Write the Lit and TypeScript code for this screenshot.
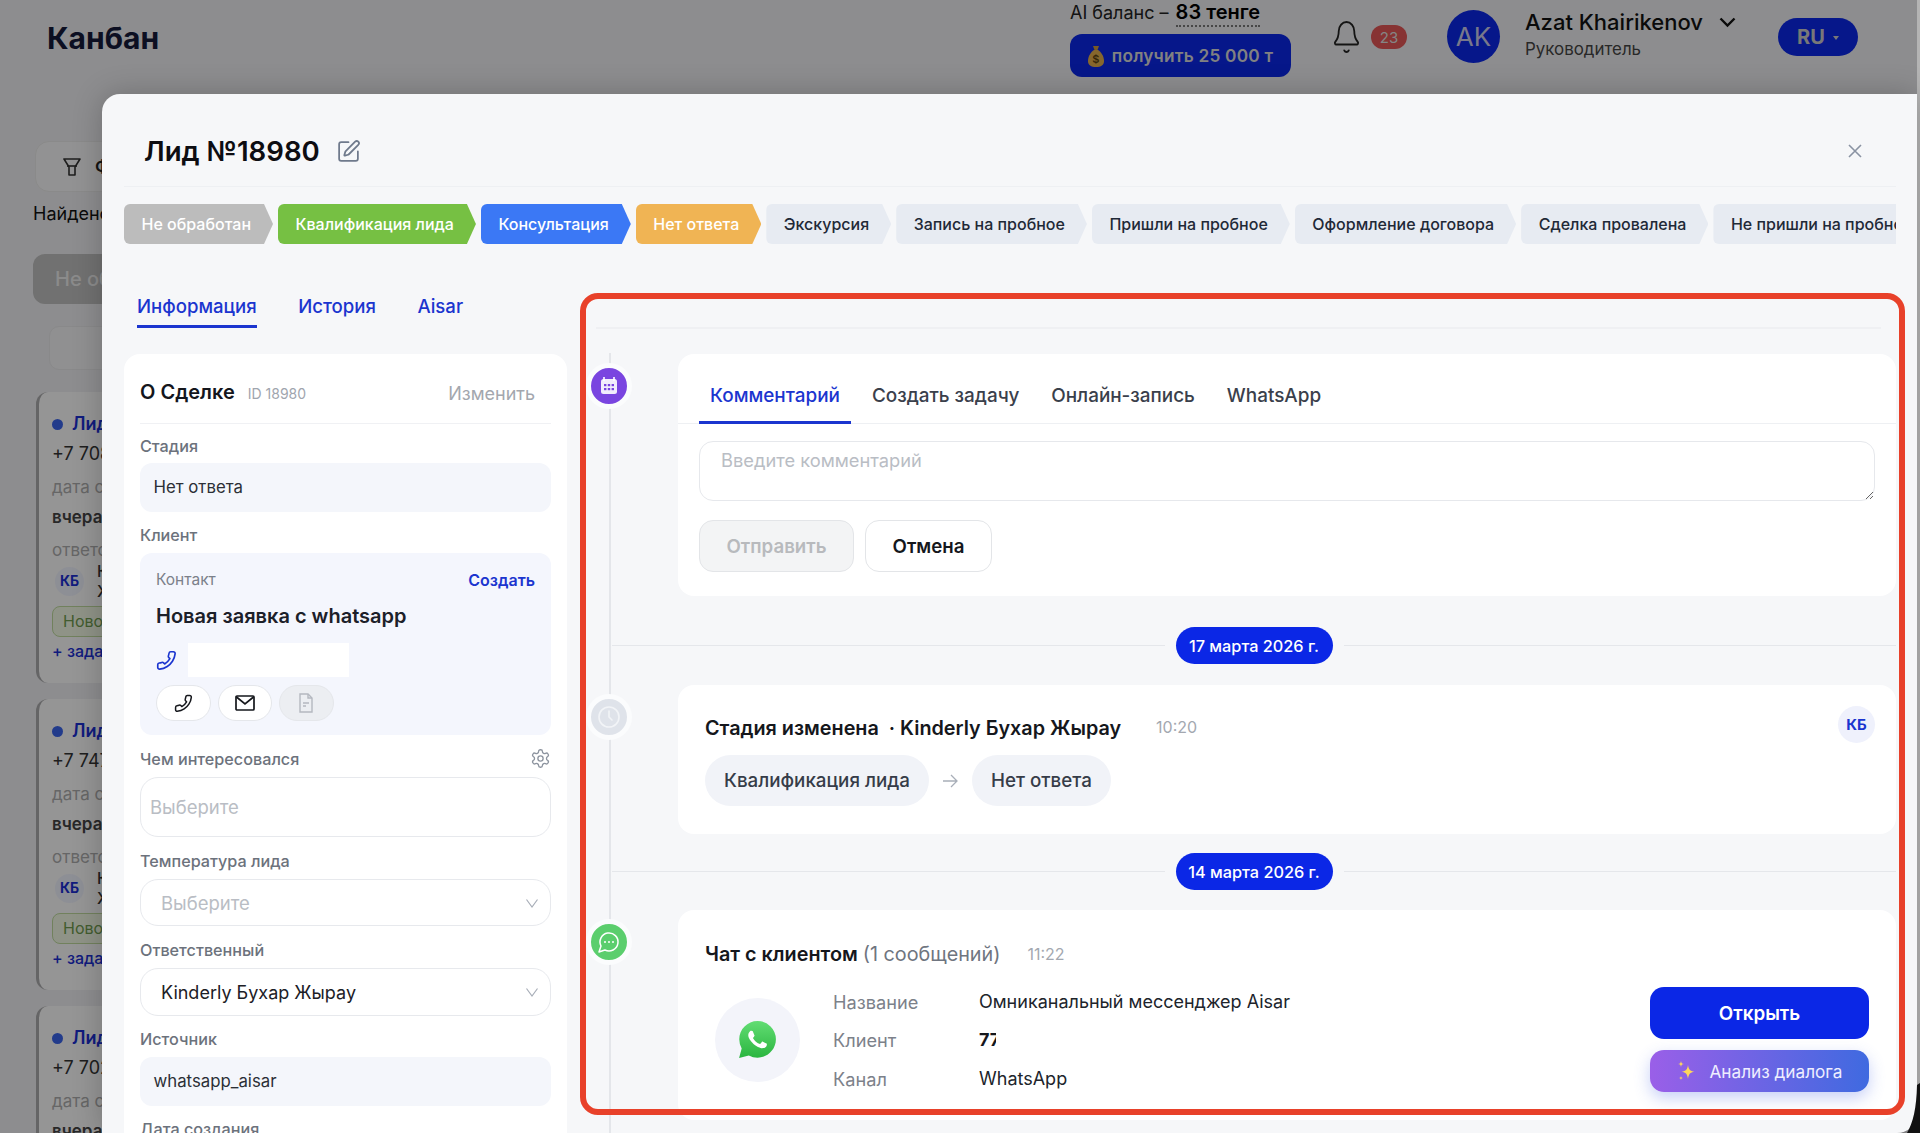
import { LitElement, html, css } from "lit";
import { customElement } from "lit/decorators.js";

const stages = [
  ["Не обработан", "grey"],
  ["Квалификация лида", "green"],
  ["Консультация", "blue"],
  ["Нет ответа", "orange"],
  ["Экскурсия", ""],
  ["Запись на пробное", ""],
  ["Пришли на пробное", ""],
  ["Оформление договора", ""],
  ["Сделка провалена", ""],
  ["Не пришли на пробное", ""],
];

const phonePath = "M22 16.92v3a2 2 0 0 1-2.18 2 19.79 19.79 0 0 1-8.63-3.07 19.5 19.5 0 0 1-6-6 19.79 19.79 0 0 1-3.07-8.67A2 2 0 0 1 4.11 2h3a2 2 0 0 1 2 1.72c.127.96.361 1.903.7 2.81a2 2 0 0 1-.45 2.11L8.09 9.91a16 16 0 0 0 6 6l1.27-1.27a2 2 0 0 1 2.11-.45c.907.339 1.85.573 2.81.7A2 2 0 0 1 22 16.92z";

const phone = (size: number, color: string) => html`<svg width=${size} height=${size} viewBox="0 0 24 24" fill="none" stroke=${color} stroke-width="1.9" stroke-linejoin="round"><path transform="translate(24 0) scale(-1 1)" d=${phonePath}></path></svg>`;
const chevron = html`<svg width="14" height="14" viewBox="0 0 14 14" fill="none" stroke="#a8aeb8" stroke-width="1.2"><path d="M1.5 3.5 7 11l5.5-7.5"></path></svg>`;

const leads = ["+7 708", "+7 747", "+7 702"];

@customElement("app-root")
export class AppRoot extends LitElement {
  static styles = css`
    :host { display: block; position: relative; width: 1920px; height: 1133px; overflow: hidden; font-family: Inter, "Noto Sans", sans-serif; color: #111827; background: #ececee; }
    * { box-sizing: border-box; }
    .page { height: 1133px; display: flex; flex-direction: column; }
    .top { display: flex; height: 94px; flex: none; align-items: flex-start; padding-left: 47px; }
    .brand { font-size: 30px; font-weight: 700; color: #141a3a; margin: 19px 0 0 0; line-height: 38px; flex: 1; }
    .bal { width: 221px; margin-right: 41px; }
    .bal-t { font-size: 18px; line-height: 24px; color: #222; white-space: nowrap; }
    .bal-t b { font-weight: 600; font-size: 20px; border-bottom: 2px dotted #777; padding-bottom: 1px; color: #000; margin-left: 2px; }
    .get { margin-top: 9px; height: 43px; border-radius: 12px; background: #0b27e6; color: #d8d8d8; display: flex; align-items: center; justify-content: center; gap: 8px; font-size: 17.300px; font-weight: 600; white-space: nowrap; letter-spacing: .2px; }
    .bell { margin-top: 19px; width: 30px; margin-left: -1px; }
    .badge { margin: 25px 0 0 10px; width: 36px; height: 24px; border-radius: 12px; background: #e25555; color: #ddd; font-size: 15px; display: flex; align-items: center; justify-content: center; }
    .ava { margin: 10px 0 0 40px; width: 53px; height: 53px; border-radius: 50%; background: #0b27e6; color: #c9c9e8; font-size: 26px; display: flex; align-items: center; justify-content: center; }
    .who { margin: 8px 0 0 25px; width: 253px; }
    .name { font-size: 22px; line-height: 28px; font-weight: 500; color: #111; display: flex; align-items: center; gap: 16px; white-space: nowrap; }
    .role { font-size: 16.900px; line-height: 20px; margin-top: 3px; color: #444; }
    .lang { margin: 18px 62px 0 0; width: 80px; height: 38px; border-radius: 19px; background: #0b27e6; color: #c9c9c9; font-weight: 700; font-size: 20px; display: flex; align-items: center; justify-content: center; gap: 8px; }
    .lang i { width: 0; height: 0; border: 3px solid transparent; border-top: 4px solid #c9c9c9; margin-top: 4px; }
    .board { padding: 47px 0 0 33px; }
    .filter { margin-left: 2px; width: 160px; height: 51px; background: #f4f4f5; border-radius: 14px; border: 1px solid #e6e6e6; display: flex; align-items: center; gap: 14px; padding-left: 27px; font-size: 18px; font-weight: 600; color: #222; }
    .found { font-size: 18px; line-height: 24px; margin-top: 10px; color: #111; }
    .col-h { margin-top: 28px; width: 300px; height: 50px; background: #bcbcbc; border-radius: 12px; color: #e8e8e8; font-size: 20px; font-weight: 500; display: flex; align-items: center; padding-left: 22px; }
    .search { margin: 22px 0 0 16px; width: 280px; height: 44px; border-radius: 10px; border: 1px solid #e4e4e6; background: #f0f0f2; }
    .lead { margin: 22px 0 0 3px; width: 300px; height: 291px; background: #f8f8f9; border-left: 3px solid #a9a9ab; border-radius: 12px; padding: 21px 0 0 13px; font-size: 18px; }
    .lead + .lead { margin-top: 16px; }
    .l1 { display: flex; align-items: center; gap: 9px; color: #1b2fd0; font-weight: 600; line-height: 22px; }
    .l1 i { width: 11px; height: 11px; border-radius: 50%; background: #3a63e8; }
    .l2 { line-height: 22px; margin-top: 8px; color: #333; }
    .l3 { line-height: 20px; margin-top: 12px; color: #aaa; font-size: 17px; }
    .l4 { line-height: 20px; margin-top: 10px; color: #444; font-weight: 600; font-size: 17px; }
    .l5 { line-height: 20px; margin-top: 13px; color: #aaa; font-size: 17px; }
    .l6 { display: flex; align-items: center; gap: 13px; margin-top: 1px; margin-left: 3px; font-size: 16px; line-height: 20px; color: #333; font-weight: 500; }
    .kb { width: 29px; height: 29px; border-radius: 50%; background: #eceef9; color: #1b2fd0; font-size: 14px; font-weight: 700; display: flex; align-items: center; justify-content: center; }
    .l7 { margin-top: 5px; width: 120px; height: 31px; border: 1px solid #bcd89b; background: #eef6e2; color: #6f9a4f; border-radius: 8px; padding-left: 10px; line-height: 29px; font-size: 16px; }
    .l8 { margin-top: 4px; color: #1b2fd0; font-weight: 500; font-size: 16px; }

    .scrim { position: absolute; inset: 0; background: rgba(0, 0, 0, .4); }
    .edge { position: absolute; right: 0; top: 0; width: 3px; height: 1085px; background: #b4b4b4; }
    .corner { position: absolute; right: 0; bottom: 0; display: block; }

    .modal { position: absolute; left: 102px; top: 94px; width: 1815px; height: 1039px; background: #f6f7f9; border-radius: 18px 0 20px 0; box-shadow: 0 0 30px rgba(0,0,0,.22); padding: 0 21px 0 22px; overflow: hidden; display: flex; flex-direction: column; }
    .m-head { height: 93px; flex: none; border-bottom: 1px solid #eef0f3; display: flex; align-items: center; padding: 22px 34px 0 20px; gap: 16px; }
    .m-head h1 { margin: 0; font-size: 27.600px; line-height: 34px; font-weight: 600; color: #0d0d12; white-space: nowrap; }
    .m-head .x { margin-left: auto; }
    .stages { display: flex; gap: 5px; margin-top: 17px; height: 40px; flex: none; overflow: hidden; }
    .st { flex: none; height: 40px; padding: 0 22px 0 17.500px; border-radius: 6px 0 0 6px; font-size: 16px; line-height: 40px; font-weight: 500; white-space: nowrap; background: #e7ebf2; color: #1f2937; clip-path: polygon(0 0, calc(100% - 9px) 0, 100% 50%, calc(100% - 9px) 100%, 0 100%); }
    .st.grey { background: #bcbcbc; color: #fff; }
    .st.green { background: #76c043; color: #fff; }
    .st.blue { background: #3b78f5; color: #fff; }
    .st.orange { background: #f0b454; color: #fff; }
    .m-body { flex: 1; display: flex; gap: 13px; min-height: 0; }
    .left { width: 443px; flex: none; }
    .l-tabs { display: flex; gap: 41.500px; margin-top: 41px; height: 43px; padding-left: 13px; }
    .l-tab { font-size: 18.600px; line-height: 43px; font-weight: 500; color: #1b35cf; height: 43px; white-space: nowrap; }
    .l-tab.on { border-bottom: 3px solid #1b35cf; }
    .about { margin-top: 26px; background: #fff; border-radius: 16px; padding: 0 16px; height: 800px; }
    .a-head { height: 70px; padding-top: 6px; border-bottom: 1px solid #f0f1f4; display: flex; align-items: center; }
    .a-head b { font-size: 20px; font-weight: 600; color: #14161c; }
    .a-head small { font-size: 14px; color: #a0a5ae; margin-left: 13px; margin-top: 3px; }
    .a-head span { margin-left: auto; margin-right: 16px; font-size: 18px; color: #a3a7ae; margin-top: 3px; }
    .f { margin-top: 13px; display: flex; flex-direction: column; gap: 8px; }
    .f.first { margin-top: 12px; gap: 7px; }
    .f.loose { margin-top: 14px; }
    .lab { font-size: 16.200px; line-height: 20px; font-weight: 500; color: #6c727c; display: flex; justify-content: space-between; align-items: center; white-space: nowrap; }
    .ro { height: 49px; background: #f4f6fb; border-radius: 12px; padding-left: 13.500px; font-size: 16.800px; line-height: 49px; color: #2b2f36; }
    .ctl { border: 1px solid #e7e9ed; border-radius: 18px; background: #fff; display: flex; align-items: center; justify-content: space-between; padding: 0 11px 0 20px; font-size: 18px; color: #1d2026; }
    .ctl.ph { color: #b9bdc4; font-size: 18.500px; }
    .ctl.tall { height: 60px; padding-left: 9px; }
    .ctl.h47 { height: 47px; }
    .ctl.h48 { height: 48px; }
    .contact { height: 182px; background: #f4f6fd; border-radius: 12px; padding: 17px 16px 0; }
    .c-top { display: flex; justify-content: space-between; font-size: 15.500px; line-height: 20px; color: #7b808a; }
    .c-top b { font-size: 16px; font-weight: 600; color: #1b35cf; }
    .c-name { margin-top: 12px; font-size: 20px; line-height: 28px; font-weight: 600; color: #1c2029; white-space: nowrap; }
    .c-ph { margin-top: 13px; height: 34px; display: flex; align-items: center; gap: 11px; }
    .mask { width: 161px; height: 34px; background: #fff; }
    .c-btns { margin-top: 8px; display: flex; gap: 7px; }
    .c-btn { width: 54.500px; height: 36px; border-radius: 18px; border: 1px solid #e5e7eb; background: #fff; display: flex; align-items: center; justify-content: center; }
    .c-btn.off { background: #eceef2; }

    .right { flex: 1; position: relative; padding-left: 98px; min-width: 0; }
    .rule { margin: 83px 15px 25px -82px; height: 2px; background: #eff0f3; }
    .rail { position: absolute; left: 28.500px; top: 109px; bottom: 0; width: 2px; background: #e4e6ea; }
    .item { position: relative; }
    .node { position: absolute; left: -92px; top: 9px; width: 46px; height: 46px; border-radius: 50%; border: 5px solid #fbfcfd; display: flex; align-items: center; justify-content: center; }
    .node.purple { background: #7a45e0; }
    .node.gray { background: #dfe3ea; }
    .node.green { background: #5bce6d; }
    .card { background: #fff; border-radius: 16px; }
    .card1 { height: 242px; }
    .t-tabs { height: 70px; display: flex; gap: 10px; padding-left: 21px; border-bottom: 1px solid #eef0f3; }
    .t-tab { padding: 0 11px; height: 70px; line-height: 84px; font-size: 18.900px; font-weight: 500; color: #3a404b; white-space: nowrap; }
    .t-tab.on { color: #1b35cf; border-bottom: 3px solid #1b35cf; }
    textarea { display: block; margin: 17px 0 0 21px; width: 1176px; height: 60px; border: 1px solid #e6e8ec; border-radius: 14px; padding: 7px 21px; font: 400 18.300px/22px Inter, sans-serif; outline: none; background: #fff; }
    textarea::placeholder { color: #b9bdc4; }
    .acts { display: flex; gap: 11px; margin: 19px 0 0 21px; }
    .btn { height: 52px; border-radius: 14px; border: 1px solid #e3e5e8; font-size: 18.700px; font-weight: 600; display: flex; align-items: center; justify-content: center; background: #fff; color: #15171c; }
    .btn.off { width: 155px; background: #f3f4f5; color: #b8babd; }
    .btn.cancel { width: 127px; }
    .date { display: flex; align-items: center; gap: 11px; margin-left: -66px; height: 37px; }
    .date::before, .date::after { content: ""; flex: 1; height: 1px; background: #e5e7eb; }
    .date span { width: 157px; height: 37px; border-radius: 19px; background: #0b27e6; color: #fff; font-size: 16.300px; font-weight: 500; display: flex; align-items: center; justify-content: center; white-space: nowrap; }
    .d1 { margin-top: 31px; margin-bottom: 21px; }
    .d2 { margin-top: 19px; margin-bottom: 20px; }
    .card2 { height: 149px; padding: 21px 21px 0 27px; }
    .c2-top { display: flex; align-items: center; height: 37px; }
    .tt { font-size: 19.800px; line-height: 24px; font-weight: 600; color: #15171c; white-space: nowrap; margin-top: 6px; }
    .tt span { font-weight: 400; color: #6f7580; }
    .tm { font-size: 16px; color: #a3a8b0; margin-left: 35px; margin-top: 5px; }
    .kbb { margin-left: auto; width: 37px; height: 37px; border-radius: 50%; background: #eff1fc; color: #1b35cf; font-size: 15px; font-weight: 700; display: flex; align-items: center; justify-content: center; }
    .pills { margin-top: 12px; display: flex; align-items: center; gap: 14px; }
    .pill { height: 51px; border-radius: 26px; background: #f1f3f8; padding: 0 19px; font-size: 18.800px; font-weight: 500; line-height: 51px; color: #363c48; white-space: nowrap; }
    .card3 { height: 210px; padding: 32px 27px 0; }
    .c3-top { display: flex; align-items: center; }
    .c3-top .tt, .c3-top .tm { margin-top: 0; }
    .c3-top .tm { margin-left: 27px; }
    .c3-row { margin-top: 21px; margin-left: 10px; display: flex; align-items: center; }
    .wa { width: 85px; height: 84px; border-radius: 50%; background: #f3f4fa; display: flex; align-items: center; justify-content: center; flex: none; }
    .grid { margin: 1px 0 0 33px; display: grid; grid-template-columns: 146px auto; row-gap: 14.500px; font-size: 18px; line-height: 24px; color: #20242b; }
    .grid .k { color: #7c818a; font-size: 18.200px; }
    .clip { width: 17px; overflow: hidden; font-weight: 700; white-space: nowrap; color: #15171c; }
    .cta { margin-left: auto; width: 219px; display: flex; flex-direction: column; gap: 11px; }
    .open { height: 52px; border-radius: 14px; background: #0b27e6; color: #fff; font-size: 18.800px; font-weight: 600; display: flex; align-items: center; justify-content: center; }
    .ai { height: 42px; border-radius: 14px; background: linear-gradient(90deg, #9a5fe8, #3f6ae0); color: #eef; font-size: 17.200px; font-weight: 400; display: flex; align-items: center; justify-content: center; gap: 13px; box-shadow: 0 6px 16px rgba(70, 100, 230, .3); white-space: nowrap; }

    .frame { position: absolute; left: 580px; top: 293px; width: 1325px; height: 822px; border: 6px solid #e8412a; border-radius: 18px; pointer-events: none; }
  `;

  render() {
    return html`
      <div class="page">
        <header class="top">
          <div class="brand">Канбан</div>
          <div class="bal">
            <div class="bal-t">AI баланс – <b>83 тенге</b></div>
            <div class="get">
              <svg width="16" height="22" viewBox="0 0 16 22"><path d="M5 1h6l-1.500 4h-3z" fill="#c9963c"/><path d="M6 5h4c3 2 6 6 6 11 0 4-3 6-8 6s-8-2-8-6c0-5 3-9 6-11z" fill="#e0ac4c"/><text x="8" y="18" font-size="11" font-family="Inter" font-weight="600" text-anchor="middle" fill="#5a4210">$</text></svg>
              получить 25 000 т
            </div>
          </div>
          <div class="bell"><svg width="31" height="36" viewBox="0 0 24 24" preserveAspectRatio="none" fill="none" stroke="#222" stroke-width="1.4" stroke-linecap="round" stroke-linejoin="round"><path d="M10.268 21a2 2 0 0 0 3.464 0"/><path d="M3.262 15.326A1 1 0 0 0 4 17h16a1 1 0 0 0 .74-1.673C19.41 13.956 18 12.499 18 8A6 6 0 0 0 6 8c0 4.499-1.411 5.956-2.738 7.326"/></svg></div>
          <div class="badge">23</div>
          <div class="ava">AK</div>
          <div class="who">
            <div class="name">Azat Khairikenov <svg width="17" height="11" viewBox="0 0 17 11" fill="none" stroke="#111" stroke-width="2.4"><path d="M1.500 1.500 8.500 8.500l7-7"/></svg></div>
            <div class="role">Руководитель</div>
          </div>
          <div class="lang">RU<i></i></div>
        </header>
        <section class="board">
          <div class="filter"><svg width="18" height="20" viewBox="0 0 18 20" fill="none" stroke="#333" stroke-width="1.600" stroke-linejoin="round"><path d="M1 2h16l-5 8v8H6v-8z"/><path d="M4 9h10" /></svg>Ф</div>
          <div class="found">Найдено</div>
          <div class="col-h">Не обработан</div>
          <div class="search"></div>
          ${leads.map((l) => html`
            <div class="lead">
              <div class="l1"><i></i>Лид</div>
              <div class="l2">${l}</div>
              <div class="l3">дата создания</div>
              <div class="l4">вчера,</div>
              <div class="l5">ответственный</div>
              <div class="l6"><span class="kb">КБ</span><span>К<br>Х</span></div>
              <div class="l7">Новое</div>
              <div class="l8">+ задача</div>
            </div>`)}
        </section>
      </div>
      <div class="scrim"></div>
      <div class="edge"></div>
      <main class="modal">
        <div class="m-head">
          <h1>Лид №18980</h1>
          <svg width="25" height="25" viewBox="0 0 24 24" fill="none" stroke="#6f7a8c" stroke-width="1.700" stroke-linecap="round" stroke-linejoin="round"><path d="M12 3H5a2 2 0 0 0-2 2v14a2 2 0 0 0 2 2h14a2 2 0 0 0 2-2v-7"/><path d="M18.375 2.625a1 1 0 0 1 3 3l-9.013 9.014a2 2 0 0 1-.853.505l-2.873.84a.5.5 0 0 1-.62-.62l.84-2.873a2 2 0 0 1 .506-.852z"/></svg>
          <svg class="x" width="14" height="14" viewBox="0 0 14 14" fill="none" stroke="#8a93a3" stroke-width="1.600"><path d="M1 1l12 12M13 1 1 13"/></svg>
        </div>
        <div class="stages">
          ${stages.map(([t, c]) => html`<div class="st ${c}">${t}</div>`)}
        </div>
        <div class="m-body">
          <div class="left">
            <div class="l-tabs">
              <div class="l-tab on">Информация</div>
              <div class="l-tab">История</div>
              <div class="l-tab">Aisar</div>
            </div>
            <div class="about">
              <div class="a-head"><b>О Сделке</b><small>ID 18980</small><span>Изменить</span></div>
              <div class="f first"><div class="lab">Стадия</div><div class="ro">Нет ответа</div></div>
              <div class="f"><div class="lab">Клиент</div>
                <div class="contact">
                  <div class="c-top"><span>Контакт</span><b>Создать</b></div>
                  <div class="c-name">Новая заявка с whatsapp</div>
                  <div class="c-ph">${phone(21, "#1b35cf")}<div class="mask"></div></div>
                  <div class="c-btns">
                    <div class="c-btn">${phone(19, "#15171c")}</div>
                    <div class="c-btn"><svg width="20" height="16" viewBox="0 0 20 16" fill="none" stroke="#15171c" stroke-width="1.700"><rect x="1" y="1" width="18" height="14" rx="1"/><path d="M1.500 2 10 9l8.500-7"/></svg></div>
                    <div class="c-btn off"><svg width="16" height="20" viewBox="0 0 16 20" fill="none" stroke="#b4b8c0" stroke-width="1.400"><path d="M2 1h8l4 4v14H2z"/><path d="M10 1v4h4M5 10h6M5 13h3"/></svg></div>
                  </div>
                </div>
              </div>
              <div class="f"><div class="lab">Чем интересовался
                <svg width="21" height="21" viewBox="0 0 24 24" fill="none" stroke="#8d949f" stroke-width="1.500"><path d="M12.22 2h-.44a2 2 0 0 0-2 2v.18a2 2 0 0 1-1 1.73l-.43.25a2 2 0 0 1-2 0l-.15-.08a2 2 0 0 0-2.73.73l-.22.38a2 2 0 0 0 .73 2.73l.15.1a2 2 0 0 1 1 1.72v.51a2 2 0 0 1-1 1.74l-.15.09a2 2 0 0 0-.73 2.73l.22.38a2 2 0 0 0 2.73.73l.15-.08a2 2 0 0 1 2 0l.43.25a2 2 0 0 1 1 1.73V20a2 2 0 0 0 2 2h.44a2 2 0 0 0 2-2v-.18a2 2 0 0 1 1-1.73l.43-.25a2 2 0 0 1 2 0l.15.08a2 2 0 0 0 2.73-.73l.22-.39a2 2 0 0 0-.73-2.73l-.15-.08a2 2 0 0 1-1-1.74v-.5a2 2 0 0 1 1-1.74l.15-.09a2 2 0 0 0 .73-2.73l-.22-.38a2 2 0 0 0-2.73-.73l-.15.08a2 2 0 0 1-2 0l-.43-.25a2 2 0 0 1-1-1.73V4a2 2 0 0 0-2-2z"/><circle cx="12" cy="12" r="3"/></svg></div>
                <div class="ctl ph tall">Выберите</div></div>
              <div class="f loose"><div class="lab">Температура лида</div><div class="ctl ph h47">Выберите ${chevron}</div></div>
              <div class="f loose"><div class="lab">Ответственный</div><div class="ctl h48">Kinderly Бухар Жырау ${chevron}</div></div>
              <div class="f"><div class="lab">Источник</div><div class="ro">whatsapp_aisar</div></div>
              <div class="f"><div class="lab">Дата создания</div></div>
            </div>
          </div>
          <div class="right">
            <div class="rail"></div>
            <div class="rule"></div>
            <div class="item">
              <div class="node purple"><svg width="20" height="20" viewBox="0 0 20 20"><path d="M5 1v4M15 1v4" stroke="#fff" stroke-width="1.600"/><rect x="2" y="3" width="16" height="15" rx="2.500" fill="#fff" fill-opacity=".9"/><g fill="#7a45e0"><rect x="5" y="8" width="2.400" height="2.200"/><rect x="8.800" y="8" width="2.400" height="2.200"/><rect x="12.600" y="8" width="2.400" height="2.200"/><rect x="5" y="12" width="2.400" height="2.200"/><rect x="8.800" y="12" width="2.400" height="2.200"/><rect x="12.600" y="12" width="2.400" height="2.200"/></g></svg></div>
              <div class="card card1">
                <div class="t-tabs">
                  <div class="t-tab on">Комментарий</div>
                  <div class="t-tab">Создать задачу</div>
                  <div class="t-tab">Онлайн-запись</div>
                  <div class="t-tab">WhatsApp</div>
                </div>
                <textarea placeholder="Введите комментарий"></textarea>
                <div class="acts">
                  <div class="btn off">Отправить</div>
                  <div class="btn cancel">Отмена</div>
                </div>
              </div>
            </div>
            <div class="date d1"><span>17 марта 2026 г.</span></div>
            <div class="item">
              <div class="node gray"><svg width="24" height="24" viewBox="0 0 24 24" fill="none" stroke="#f2f4f7" stroke-width="1.600" stroke-linecap="round"><circle cx="12" cy="12" r="10"/><path d="M12 6v6l3 3"/></svg></div>
              <div class="card card2">
                <div class="c2-top">
                  <div class="tt">Стадия изменена &nbsp;· Kinderly Бухар Жырау</div>
                  <div class="tm">10:20</div>
                  <div class="kbb">КБ</div>
                </div>
                <div class="pills">
                  <div class="pill">Квалификация лида</div>
                  <svg width="15" height="14" viewBox="0 0 15 14" fill="none" stroke="#a8aeb8" stroke-width="1.300"><path d="M0 7h14M8 1l6 6-6 6"/></svg>
                  <div class="pill">Нет ответа</div>
                </div>
              </div>
            </div>
            <div class="date d2"><span>14 марта 2026 г.</span></div>
            <div class="item">
              <div class="node green"><svg width="24" height="24" viewBox="0 0 24 24" fill="none" stroke="#fff" stroke-width="1.500" stroke-linejoin="round"><path d="M7.9 20A9 9 0 1 0 4 16.1L2 22Z"/><g fill="#fff" stroke="none"><circle cx="8" cy="12" r="1"/><circle cx="12" cy="12" r="1"/><circle cx="16" cy="12" r="1"/></g></svg></div>
              <div class="card card3">
                <div class="c3-top">
                  <div class="tt">Чат с клиентом <span>(1 сообщений)</span></div>
                  <div class="tm">11:22</div>
                </div>
                <div class="c3-row">
                  <div class="wa"><svg width="37" height="37" viewBox="0 0 24 24"><defs><linearGradient id="wg" x1="0" y1="0" x2="0" y2="1"><stop offset="0" stop-color="#62dd73"/><stop offset="1" stop-color="#2ab53f"/></linearGradient></defs><path fill="url(#wg)" d="M.057 24l1.688-6.163A11.87 11.87 0 0 1 .157 11.892C.16 5.335 5.495 0 12.05 0a11.82 11.82 0 0 1 8.413 3.488 11.82 11.82 0 0 1 3.48 8.413c-.003 6.558-5.339 11.893-11.893 11.893h-.005a11.88 11.88 0 0 1-5.683-1.448Z"/><path fill="#fff" d="M17.472 14.382c-.297-.149-1.758-.867-2.03-.967-.273-.099-.471-.148-.67.15-.197.297-.767.966-.94 1.164-.173.199-.347.223-.644.075-.297-.15-1.255-.463-2.39-1.475-.883-.788-1.48-1.761-1.653-2.059-.173-.297-.018-.458.13-.606.134-.133.298-.347.446-.52.149-.174.198-.298.298-.497.099-.198.05-.371-.025-.52-.075-.149-.669-1.612-.916-2.207-.242-.579-.487-.5-.669-.51-.173-.008-.371-.01-.57-.01-.198 0-.52.074-.792.372-.272.297-1.04 1.016-1.04 2.479 0 1.462 1.065 2.875 1.213 3.074.149.198 2.096 3.2 5.077 4.487.709.306 1.262.489 1.694.625.712.227 1.36.195 1.871.118.571-.085 1.758-.719 2.006-1.413.248-.694.248-1.289.173-1.413-.074-.124-.272-.198-.57-.347"/></svg></div>
                  <div class="grid">
                    <div class="k">Название</div><div>Омниканальный мессенджер Aisar</div>
                    <div class="k">Клиент</div><div class="clip">77</div>
                    <div class="k">Канал</div><div>WhatsApp</div>
                  </div>
                  <div class="cta">
                    <div class="open">Открыть</div>
                    <div class="ai"><svg width="20" height="22" viewBox="0 0 20 22" fill="#ffd75a"><path d="M11 5c.6 4.500 2 6 6.500 6.700C13 12.400 11.600 14 11 19c-.6-5-2-6.600-6.500-7.300C9 11 10.400 9.500 11 5z"/><path d="M4 1c.3 2 .9 2.700 3 3-2.100.3-2.700 1-3 3-.3-2-.9-2.700-3-3 2.100-.3 2.700-1 3-3z"/><path d="M4 16c.2 1.300.6 1.800 2 2-1.400.2-1.800.7-2 2-.2-1.300-.6-1.800-2-2 1.400-.2 1.800-.7 2-2z"/></svg>Анализ диалога</div>
                  </div>
                </div>
              </div>
            </div>
          </div>
        </div>
      </main>
      <div class="frame"></div>
      <svg class="corner" width="16" height="50" viewBox="0 0 16 50"><path d="M16 0V50H3C9 40 12.500 25 13 2Z" fill="#111"/></svg>
    `;
  }
}
